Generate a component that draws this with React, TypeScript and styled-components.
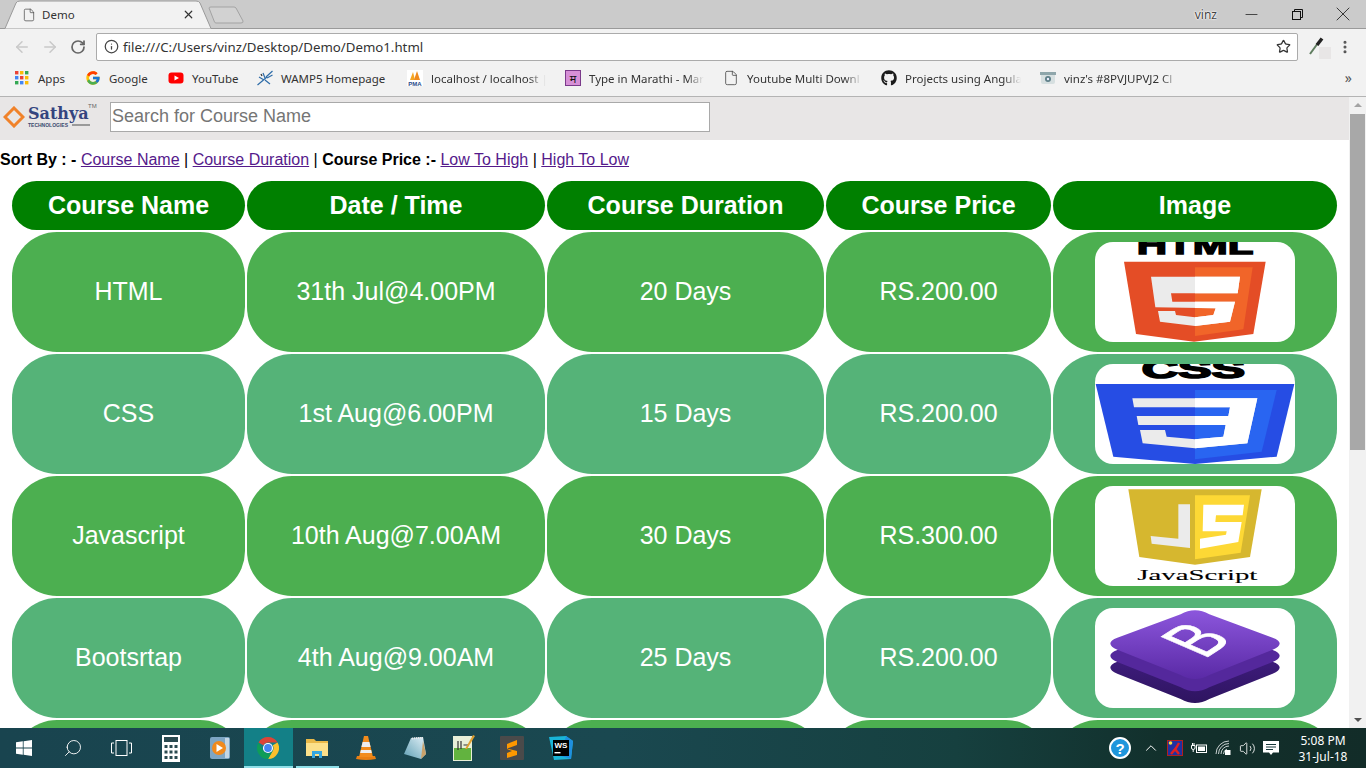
import styled, { createGlobalStyle } from 'styled-components';
import {
  ArrowLeft,
  ArrowRight,
  ChevronUp,
  EllipsisVertical,
  File,
  Info,
  Minus,
  RotateCw,
  Search,
  Star,
  Volume2,
  X,
} from 'lucide-react';
import { FaGithub } from 'react-icons/fa';
import { FcGoogle } from 'react-icons/fc';
import type { ReactNode } from 'react';

const UI_FONT = `'Noto Sans', 'Open Sans', sans-serif`;
const PAGE_FONT = `'Liberation Sans', Arial, sans-serif`;

const GlobalStyle = createGlobalStyle`
  html, body {
    margin: 0;
    padding: 0;
    height: 100%;
    overflow: hidden;
    background: #fff;
  }
  * { box-sizing: border-box; }
`;

/* ---------- logos inside the Image column ---------- */

function HtmlLogo() {
  const five =
    '303,140 570,140 563,190 363,190 367,215 555,215 540,275 435,288 330,275 324,243 375,243 378,255 435,262 490,255 497,235 316,232';
  return (
    <LogoSvg viewBox="135 37 600 298">
      <text x="260" y="73" fontFamily={PAGE_FONT} fontWeight="700" fontSize="76" textLength="350" lengthAdjust="spacingAndGlyphs" stroke="#000" strokeWidth="4">
        HTML
      </text>
      <polygon points="222,95 647,95 610,312 432,335 258,312" fill="#e44d26" />
      <polygon points="435,112 608,112 580,298 435,318" fill="#f16529" />
      <polygon points={five} fill="#ebebeb" />
      <clipPath id="five-right">
        <rect x="435" y="100" width="200" height="220" />
      </clipPath>
      <polygon points={five} fill="#fff" clipPath="url(#five-right)" />
    </LogoSvg>
  );
}

function CssLogo() {
  const three =
    '247,505 622,505 592,640 435,655 278,640 270,600 345,600 350,620 435,628 520,620 527,585 265,585 260,558 535,558 540,532 252,532';
  return (
    <LogoSvg viewBox="135 403 600 298">
      <text x="275" y="443" fontFamily={PAGE_FONT} fontWeight="700" fontSize="80" textLength="310" lengthAdjust="spacingAndGlyphs" stroke="#000" strokeWidth="5">
        CSS
      </text>
      <polygon points="137,462 733,462 680,680 435,702 190,680" fill="#264de4" />
      <polygon points="435,480 680,480 635,665 435,688" fill="#2965f1" />
      <polygon points={three} fill="#ebebeb" />
      <clipPath id="three-right">
        <rect x="435" y="490" width="220" height="180" />
      </clipPath>
      <polygon points={three} fill="#fff" clipPath="url(#three-right)" />
    </LogoSvg>
  );
}

function JsLogo() {
  return (
    <LogoSvg viewBox="135 33 600 298">
      <polygon points="235,42 635,42 600,245 435,268 268,245" fill="#d6b72f" />
      <polygon points="435,60 600,60 572,232 435,252" fill="#fdd835" />
      <polygon points="385,87 420,87 420,218 305,205 302,182 385,190" fill="#ebebeb" />
      <polygon points="460,88 582,88 578,120 498,120 496,140 575,140 565,200 450,220 450,190 528,178 530,168 458,168" fill="#fff" />
      <text x="262" y="315" fontFamily="'Liberation Serif', serif" fontSize="46" textLength="360" lengthAdjust="spacingAndGlyphs" stroke="#000" strokeWidth="0.3">
        JavaScript
      </text>
    </LogoSvg>
  );
}

function BootstrapLogo() {
  const layer =
    'M392 418 C420 402 450 402 478 418 L668 488 C696 498 696 512 668 524 L478 600 C450 616 420 616 392 600 L202 524 C174 512 174 498 202 488 Z';
  return (
    <LogoSvg viewBox="135 400 600 298">
      <defs>
        <linearGradient id="bs-top" x1="0" y1="0" x2="0" y2="1">
          <stop offset="0" stopColor="#8c56dc" />
          <stop offset="1" stopColor="#5a2aa6" />
        </linearGradient>
        <linearGradient id="bs-bottom" x1="0" y1="0" x2="0" y2="1">
          <stop offset="0" stopColor="#47218c" />
          <stop offset="1" stopColor="#2e1460" />
        </linearGradient>
      </defs>
      <path d={layer} transform="translate(0 72)" fill="url(#bs-bottom)" />
      <path d={layer} transform="translate(0 37)" fill="#54289c" />
      <path d={layer} fill="url(#bs-top)" />
      <text transform="matrix(1.37 -0.89 2.03 0.87 462 553)" fontFamily={PAGE_FONT} fontSize="100" fill="#fff" stroke="#fff" strokeWidth="1.2">
        B
      </text>
    </LogoSvg>
  );
}

/* ---------- bookmark icons ---------- */

function AppsIcon() {
  const colors = ['#ea4335', '#fbbc05', '#34a853', '#4285f4', '#ea4335', '#fbbc05', '#34a853', '#4285f4', '#fbbc05'];
  return (
    <svg width="16" height="16" viewBox="0 0 16 16">
      {colors.map((c, i) => (
        <rect key={i} x={1 + (i % 3) * 5} y={1 + Math.floor(i / 3) * 5} width="3.4" height="3.4" fill={c} />
      ))}
    </svg>
  );
}

function YoutubeIcon() {
  return (
    <svg width="16" height="16" viewBox="0 0 16 16">
      <rect x="0.5" y="2.5" width="15" height="11" rx="3" fill="#f00" />
      <polygon points="6.5,5.5 11,8 6.5,10.5" fill="#fff" />
    </svg>
  );
}

function WampIcon() {
  return (
    <svg width="16" height="16" viewBox="0 0 16 16" fill="none" stroke="#2e6ca8" strokeWidth="1.2">
      <path d="M0.5 15 L10 7 M2 7 L7 10 M6 3 L8 8 M15.5 1 L9 7 M15.5 5 L10 8 M8 10 L13 14" />
      <path d="M4 4 L5 6" stroke="#333" />
    </svg>
  );
}

function PmaIcon() {
  return (
    <svg width="16" height="16" viewBox="0 0 16 16">
      <rect width="16" height="16" fill="#fff" />
      <polygon points="3,10 6,2 8,10" fill="#f5a623" />
      <polygon points="7,10 10,1 13,10" fill="#f08a1d" />
      <text x="8" y="15.5" textAnchor="middle" fontFamily={PAGE_FONT} fontWeight="700" fontSize="6" fill="#2a4a8a">
        PMA
      </text>
    </svg>
  );
}

function MarathiIcon() {
  return <MarathiBox>म</MarathiBox>;
}

function ClashIcon() {
  return (
    <svg width="16" height="16" viewBox="0 0 16 16">
      <rect x="1" y="2" width="14" height="12" rx="2" fill="#d6dfe0" />
      <rect x="0" y="2" width="16" height="3" fill="#8fa6ab" />
      <circle cx="8" cy="9" r="3" fill="#5e7f88" />
      <circle cx="8" cy="9" r="1.2" fill="#eef" />
    </svg>
  );
}

/* ---------- taskbar icons ---------- */

function WindowsLogo() {
  return (
    <svg width="16" height="16" viewBox="0 0 16 16" fill="#fff">
      <polygon points="0,2.3 6.8,1.3 6.8,7.6 0,7.6" />
      <polygon points="7.6,1.2 16,0 16,7.6 7.6,7.6" />
      <polygon points="0,8.4 6.8,8.4 6.8,14.7 0,13.7" />
      <polygon points="7.6,8.4 16,8.4 16,16 7.6,14.8" />
    </svg>
  );
}

function TaskViewIcon() {
  return (
    <svg width="21" height="16" viewBox="0 0 21 16" fill="none" stroke="#fff" strokeWidth="1">
      <rect x="5" y="0.5" width="11" height="15" />
      <path d="M3 3 H0.5 V13 H3 M18 3 H20.5 V13 H18" />
    </svg>
  );
}

function CalcIcon() {
  const keys = [0, 1, 2, 3, 4, 5, 6, 7, 8];
  return (
    <svg width="18" height="27" viewBox="0 0 18 27">
      <rect width="18" height="27" fill="#fff" />
      <rect x="2" y="2" width="14" height="5" fill="#2a4a50" />
      {keys.map((k) => (
        <rect key={k} x={2.5 + (k % 3) * 5} y={10 + Math.floor(k / 3) * 5.5} width="3" height="3" fill="#2a4a50" />
      ))}
    </svg>
  );
}

function MediaIcon() {
  return (
    <svg width="20" height="22" viewBox="0 0 20 22">
      <rect width="20" height="22" rx="2" fill="#7ea6c4" />
      <rect x="15" y="1" width="4" height="20" fill="#c3d6e4" />
      <circle cx="9" cy="11" r="7" fill="#f08a1d" />
      <polygon points="6.5,7 13,11 6.5,15" fill="#fff" />
    </svg>
  );
}

function ChromeIcon() {
  return (
    <svg width="22" height="22" viewBox="0 0 48 48">
      <path d="M24 0 A24 24 0 0 1 44.8 12 L24 12 A12 12 0 0 0 13.6 18 L3.2 12 A24 24 0 0 1 24 0 Z" fill="#db4437" />
      <path d="M44.8 12 A24 24 0 0 1 24 48 L34.4 30 A12 12 0 0 0 34.4 18 Z" fill="#fbc02d" />
      <path d="M3.2 12 A24 24 0 0 0 24 48 L34.4 30 A12 12 0 0 1 13.6 30 Z" fill="#0f9d58" />
      <circle cx="24" cy="24" r="11" fill="#fff" />
      <circle cx="24" cy="24" r="8.5" fill="#4285f4" />
    </svg>
  );
}

function ExplorerIcon() {
  return (
    <svg width="22" height="20" viewBox="0 0 22 20">
      <path d="M0 1 H8 L10 3 H22 V18 H0 Z" fill="#e9b949" />
      <rect x="0" y="5" width="22" height="13" fill="#fbe08a" />
      <path d="M6 20 V13 H16 V20 H13 V16 H9 V20 Z" fill="#35a7e0" />
    </svg>
  );
}

function VlcIcon() {
  return (
    <svg width="20" height="24" viewBox="0 0 20 24">
      <path d="M1 20 H19 L20 23 Q10 25 0 23 Z" fill="#e97f12" />
      <polygon points="8,0 12,0 17,21 3,21" fill="#f28c1c" />
      <polygon points="6.600,6 13.400,6 14.600,11 5.400,11" fill="#eee" />
      <polygon points="4.800,14 15.200,14 15.800,17 4.200,17" fill="#eee" />
    </svg>
  );
}

function NotepadIcon() {
  return (
    <svg width="22" height="22" viewBox="0 0 22 22">
      <defs>
        <linearGradient id="pad" x1="0" y1="1" x2="1" y2="0">
          <stop offset="0" stopColor="#5f9fb4" />
          <stop offset="1" stopColor="#e4f2f8" />
        </linearGradient>
      </defs>
      <polygon points="7,1 19,0 22,17 17,22 0,17" fill="url(#pad)" />
      <polygon points="19,4 22,17 17,22" fill="#c9a26a" />
      <path d="M8 1.500 L19 0.500" stroke="#e8e8e8" strokeWidth="2" strokeDasharray="1 1" />
    </svg>
  );
}

function NppIcon() {
  return (
    <svg width="22" height="26" viewBox="0 0 22 26">
      <rect x="0" y="1" width="19" height="25" fill="#e8efd8" />
      <rect x="1" y="13" width="17" height="12" fill="#62b33f" />
      <path d="M5 6 V15 M8 6 V14 M10.500 10 H15" stroke="#333" strokeWidth="1.2" />
      <polygon points="20,0 22,1 14,14 12,14" fill="#e0a030" />
    </svg>
  );
}

function SublimeIcon() {
  return (
    <svg width="24" height="24" viewBox="0 0 24 24">
      <rect width="24" height="24" rx="1" fill="#4a4a4a" />
      <polygon points="17,4 17,9 7,12.500 17,15 17,19 7,22 7,17 12,15 7,13 7,8" fill="#ff9800" />
    </svg>
  );
}

function WebStormIcon() {
  return (
    <svg width="24" height="24" viewBox="0 0 24 24">
      <polygon points="0,1 17,0 24,5 22,23 5,24" fill="#19b5d8" />
      <polygon points="17,0 24,5 22,23 12,20" fill="#1f8fe0" />
      <rect x="4" y="4" width="16" height="16" fill="#000" />
      <text x="5.5" y="12" fontFamily={PAGE_FONT} fontWeight="700" fontSize="8" fill="#fff">
        WS
      </text>
      <rect x="5.5" y="16" width="6" height="1.4" fill="#fff" />
    </svg>
  );
}

function HelpIcon() {
  return <HelpBadge>?</HelpBadge>;
}

function TrayRedIcon() {
  return (
    <svg width="16" height="16" viewBox="0 0 16 16">
      <rect x="0.5" y="0.5" width="15" height="15" fill="#2030a0" stroke="#b02020" />
      <circle cx="3.5" cy="3" r="1.8" fill="#f5e040" />
      <path d="M4 14 L9 8 L12 3 M8 9 L12 14" stroke="#e02020" strokeWidth="2.4" fill="none" />
    </svg>
  );
}

function BatteryIcon() {
  return (
    <svg width="16" height="12" viewBox="0 0 16 12" fill="none" stroke="#fff">
      <rect x="5.5" y="3" width="10" height="7.5" />
      <rect x="7" y="4.5" width="7" height="4.5" fill="#fff" stroke="none" />
      <path d="M0.5 3.5 H4 V6 Q4 7.5 2.2 7.5 Q0.5 7.5 0.5 6 Z M1.5 1 V3.5 M3 1 V3.5 M2.2 7.5 V10" />
    </svg>
  );
}

function WifiIcon() {
  return (
    <svg width="16" height="16" viewBox="0 0 16 16" fill="none" stroke="#c8d0d0" strokeWidth="1">
      <path d="M1 14 A13 13 0 0 1 14 1 M3.5 14 A10.5 10.5 0 0 1 14 3.5 M6 14 A8 8 0 0 1 14 6 M8.5 14 A5.5 5.5 0 0 1 12 9" />
      <rect x="10" y="10" width="5.5" height="5" fill="#fff" stroke="none" />
    </svg>
  );
}

function NotificationIcon() {
  return (
    <svg width="16" height="16" viewBox="0 0 16 16">
      <path d="M0 1 H16 V12.5 H10 L8 15 L6 12.5 H0 Z" fill="#fff" />
      <path d="M3 4.5 H13 M3 7 H13 M3 9.5 H10" stroke="#16383a" strokeWidth="1" />
    </svg>
  );
}

function Eyedropper() {
  return (
    <EyedropperWrap>
      <svg width="16" height="18" viewBox="0 0 16 18" fill="none">
        <path d="M2 17 L10 6" stroke="#5f7d5f" strokeWidth="2" />
        <path d="M9 8 L14 1.5" stroke="#222" strokeWidth="3.4" />
      </svg>
      <EyedropperSwatch />
    </EyedropperWrap>
  );
}

/* ---------- data ---------- */

type Bookmark = { icon: ReactNode; label: string; width: number; fade?: boolean };

const bookmarks: Bookmark[] = [
  { icon: <AppsIcon />, label: 'Apps', width: 28 },
  { icon: <FcGoogle size={16} />, label: 'Google', width: 40 },
  { icon: <YoutubeIcon />, label: 'YouTube', width: 46 },
  { icon: <WampIcon />, label: 'WAMP5 Homepage', width: 107 },
  { icon: <PmaIcon />, label: 'localhost / localhost |', width: 115, fade: true },
  { icon: <MarathiIcon />, label: 'Type in Marathi - Mar', width: 115, fade: true },
  { icon: <File size={16} strokeWidth={1.2} color="#444" />, label: 'Youtube Multi Downl', width: 115, fade: true },
  { icon: <FaGithub size={16} color="#1b1b1b" />, label: 'Projects using Angula', width: 116, fade: true },
  { icon: <ClashIcon />, label: "vinz's #8PVJUPVJ2 Cl", width: 115, fade: true },
];

const courses = [
  { name: 'HTML', date: '31th Jul@4.00PM', duration: '20 Days', price: 'RS.200.00', logo: <HtmlLogo /> },
  { name: 'CSS', date: '1st Aug@6.00PM', duration: '15 Days', price: 'RS.200.00', logo: <CssLogo /> },
  { name: 'Javascript', date: '10th Aug@7.00AM', duration: '30 Days', price: 'RS.300.00', logo: <JsLogo /> },
  { name: 'Bootsrtap', date: '4th Aug@9.00AM', duration: '25 Days', price: 'RS.200.00', logo: <BootstrapLogo /> },
];

const columns = [
  { title: 'Course Name', width: 233 },
  { title: 'Date / Time', width: 298 },
  { title: 'Course Duration', width: 277 },
  { title: 'Course Price', width: 225 },
  { title: 'Image', width: 284 },
];

const taskbarApps: { icon: ReactNode; active?: boolean; running?: boolean }[] = [
  { icon: <CalcIcon /> },
  { icon: <MediaIcon /> },
  { icon: <ChromeIcon />, active: true },
  { icon: <ExplorerIcon />, running: true },
  { icon: <VlcIcon /> },
  { icon: <NotepadIcon /> },
  { icon: <NppIcon /> },
  { icon: <SublimeIcon /> },
  { icon: <WebStormIcon /> },
];

export default function App() {
  return (
    <>
      <GlobalStyle />
      <Screen>
        <TabStrip>
          <Tab>
            <TabShape viewBox="0 0 216 29" width="216" height="29">
              <path d="M0 28.5 H5 L16 3 Q17 1 20 1 H196 Q199 1 200 3 L211 28.5 H216" fill="#f2f2f2" stroke="#9a9a9a" />
            </TabShape>
            <TabIcon>
              <File size={14} strokeWidth={1.2} color="#444" />
            </TabIcon>
            <TabTitle>Demo</TabTitle>
            <TabClose>
              <X size={13} strokeWidth={2.2} />
            </TabClose>
          </Tab>
          <NewTab>
            <svg width="36" height="18" viewBox="0 0 36 18" fill="#d2d2d2" stroke="#a3a3a3">
              <path d="M1 2 Q1 1 3 1 H26 Q27 1 28 2 L35 15 Q35.500 17 33 17 H8 Q7 17 6.500 16 Z" />
            </svg>
          </NewTab>
          <UserName>vinz</UserName>
          <WindowButton>
            <Minus size={19} strokeWidth={0.9} />
          </WindowButton>
          <WindowButton>
            <svg width="11" height="11" viewBox="0 0 11 11" fill="none" stroke="#111">
              <rect x="0.5" y="2.5" width="8" height="8" />
              <path d="M2.500 2.500 V0.500 H10.500 V8.500 H8.500" />
            </svg>
          </WindowButton>
          <WindowButton>
            <X size={24} strokeWidth={0.8} />
          </WindowButton>
        </TabStrip>

        <Toolbar>
          <NavButton $muted>
            <ArrowLeft size={18} />
          </NavButton>
          <NavButton $muted>
            <ArrowRight size={18} />
          </NavButton>
          <NavButton>
            <RotateCw size={16} strokeWidth={2.6} />
          </NavButton>
          <AddressBar>
            <Info size={15} strokeWidth={2} color="#444" />
            <AddressText>file:///C:/Users/vinz/Desktop/Demo/Demo1.html</AddressText>
            <Star size={15} strokeWidth={2} color="#333" />
          </AddressBar>
          <ToolbarEnd>
            <Eyedropper />
            <EllipsisVertical size={16} strokeWidth={2.6} color="#555" />
          </ToolbarEnd>
        </Toolbar>

        <BookmarkBar>
          {bookmarks.map((b) => (
            <BookmarkItem key={b.label}>
              <BookmarkIcon>{b.icon}</BookmarkIcon>
              <BookmarkLabel $width={b.width} $fade={b.fade}>
                {b.label}
              </BookmarkLabel>
            </BookmarkItem>
          ))}
          <MoreBookmarks>»</MoreBookmarks>
        </BookmarkBar>

        <Viewport>
          <Page>
            <SearchHeader>
              <Logo>
                <svg width="22" height="22" viewBox="0 0 22 22" fill="none" stroke="#f0822a" strokeWidth="3">
                  <polygon points="11,2 20,11 11,20 2,11" />
                </svg>
                <LogoWords>
                  <LogoName>
                    Sathya<LogoMark>TM</LogoMark>
                  </LogoName>
                  <LogoSub>TECHNOLOGIES</LogoSub>
                </LogoWords>
              </Logo>
              <SearchInput placeholder="Search for Course Name" readOnly />
            </SearchHeader>

            <SortRow>
              <b>Sort By : - </b>
              <SortLink href="#">Course Name</SortLink> | <SortLink href="#">Course Duration</SortLink> |{' '}
              <b>Course Price :- </b>
              <SortLink href="#">Low To High</SortLink> | <SortLink href="#">High To Low</SortLink>
            </SortRow>

            <CourseTable>
              <colgroup>
                {columns.map((c) => (
                  <col key={c.title} width={c.width} />
                ))}
              </colgroup>
              <thead>
                <tr>
                  {columns.map((c) => (
                    <HeadCell key={c.title}>{c.title}</HeadCell>
                  ))}
                </tr>
              </thead>
              <tbody>
                {courses.map((course) => (
                  <tr key={course.name}>
                    <BodyCell>{course.name}</BodyCell>
                    <BodyCell>{course.date}</BodyCell>
                    <BodyCell>{course.duration}</BodyCell>
                    <BodyCell>{course.price}</BodyCell>
                    <ImageCell>
                      <LogoFrame>{course.logo}</LogoFrame>
                    </ImageCell>
                  </tr>
                ))}
                <tr>
                  {columns.map((c) => (
                    <BodyCell key={c.title} />
                  ))}
                </tr>
              </tbody>
            </CourseTable>
          </Page>
          <ScrollTrack>
            <ScrollArrow $down={false} />
            <ScrollThumb />
            <ScrollArrow $down />
          </ScrollTrack>
        </Viewport>

        <Taskbar>
          <TaskButton>
            <WindowsLogo />
          </TaskButton>
          <TaskButton>
            <Search size={20} strokeWidth={1.1} color="#fff" style={{ transform: 'scaleX(-1)' }} />
          </TaskButton>
          <TaskButton>
            <TaskViewIcon />
          </TaskButton>
          {taskbarApps.map((app, i) => (
            <TaskButton key={i} $active={app.active} $running={app.running}>
              {app.icon}
            </TaskButton>
          ))}
          <Tray>
            <HelpIcon />
            <TrayIcon>
              <ChevronUp size={18} strokeWidth={1.3} color="#fff" />
            </TrayIcon>
            <TrayIcon>
              <TrayRedIcon />
            </TrayIcon>
            <TrayIcon>
              <BatteryIcon />
            </TrayIcon>
            <TrayIcon>
              <WifiIcon />
            </TrayIcon>
            <TrayIcon>
              <Volume2 size={17} strokeWidth={1.2} color="#fff" />
            </TrayIcon>
            <TrayIcon>
              <NotificationIcon />
            </TrayIcon>
            <Clock>
              <span>5:08 PM</span>
              <span>31-Jul-18</span>
            </Clock>
          </Tray>
        </Taskbar>
      </Screen>
    </>
  );
}

const Screen = styled.div`
  width: 1366px;
  height: 768px;
  display: flex;
  flex-direction: column;
  overflow: hidden;
  font-family: ${UI_FONT};
`;

const TabStrip = styled.div`
  height: 29px;
  flex: none;
  display: flex;
  align-items: center;
  background: #cbcbcb;
  border-bottom: 1px solid #9a9a9a;
`;

const Tab = styled.div`
  position: relative;
  width: 205px;
  height: 29px;
  margin-bottom: -1px;
  display: flex;
  align-items: center;
  padding-left: 22px;
`;

const TabShape = styled.svg`
  position: absolute;
  left: 0;
  top: 0;
`;

const TabIcon = styled.span`
  position: relative;
  display: flex;
  width: 20px;
`;

const TabTitle = styled.span`
  position: relative;
  font-size: 11.5px;
  color: #333;
`;

const TabClose = styled.span`
  position: absolute;
  left: 182px;
  top: 8px;
  display: flex;
  color: #333;
`;

const NewTab = styled.div`
  display: flex;
  margin-left: 3px;
  margin-top: 2px;
`;

const UserName = styled.span`
  margin-left: auto;
  margin-right: 11px;
  font-size: 12px;
  color: #444;
  text-shadow: 0 0 2px #fff, 0 0 2px #fff, 0 0 1px #fff;
`;

const WindowButton = styled.div`
  width: 46px;
  height: 24px;
  display: flex;
  align-items: center;
  justify-content: center;
  color: #111;
`;

const Toolbar = styled.div`
  height: 33px;
  flex: none;
  display: flex;
  align-items: center;
  padding: 2px 0 0 8px;
  background: #f2f2f2;
`;

const NavButton = styled.div<{ $muted?: boolean }>`
  width: 28px;
  display: flex;
  justify-content: center;
  color: ${(p) => (p.$muted ? '#c9c9c9' : '#666')};
`;

const AddressBar = styled.div`
  width: 1202px;
  height: 28px;
  margin-left: 4px;
  padding: 0 6px 0 7px;
  display: flex;
  align-items: center;
  background: #fff;
  border: 1px solid #ababab;
  border-radius: 2px;
`;

const AddressText = styled.span`
  flex: 1;
  margin-left: 4px;
  font-size: 13.25px;
  color: #333;
`;

const ToolbarEnd = styled.div`
  flex: 1;
  display: flex;
  align-items: center;
  justify-content: space-between;
  padding: 0 13px 0 10px;
`;

const EyedropperWrap = styled.div`
  position: relative;
  width: 20px;
  height: 20px;
`;

const EyedropperSwatch = styled.span`
  position: absolute;
  right: -3px;
  bottom: -2px;
  width: 12px;
  height: 12px;
  background: #e8e6e6;
`;

const BookmarkBar = styled.div`
  height: 35px;
  flex: none;
  display: flex;
  align-items: center;
  gap: 19px;
  padding: 0 14px 2px;
  background: #f2f2f2;
  border-bottom: 1px solid #b4b4b4;
`;

const BookmarkItem = styled.div`
  display: flex;
  align-items: center;
  gap: 8px;
`;

const BookmarkIcon = styled.span`
  display: flex;
  width: 16px;
  height: 16px;
  align-items: center;
  justify-content: center;
`;

const BookmarkLabel = styled.span<{ $width: number; $fade?: boolean }>`
  display: block;
  width: ${(p) => p.$width}px;
  white-space: nowrap;
  font-size: 11.5px;
  color: #333;
  ${(p) =>
    p.$fade &&
    `-webkit-mask-image: linear-gradient(to right, #000 85%, transparent 100%);
     mask-image: linear-gradient(to right, #000 85%, transparent 100%);`}
`;

const MarathiBox = styled.span`
  display: flex;
  width: 16px;
  height: 16px;
  align-items: center;
  justify-content: center;
  background: #d68fd6;
  border: 1px solid #7a3a8a;
  font-family: 'Noto Sans', 'Lohit Devanagari', sans-serif;
  font-size: 11px;
  line-height: 1;
  color: #111;
`;

const MoreBookmarks = styled.span`
  margin-left: auto;
  font-size: 14px;
  line-height: 1;
  color: #555;
`;

const Viewport = styled.div`
  flex: 1;
  min-height: 0;
  display: flex;
`;

const Page = styled.div`
  width: 1349px;
  overflow: hidden;
  background: #fff;
  font-family: ${PAGE_FONT};
`;

const SearchHeader = styled.div`
  height: 43px;
  display: flex;
  align-items: center;
  padding: 0 0 4px 3px;
  background: #e8e6e6;
`;

const Logo = styled.div`
  width: 107px;
  display: flex;
  align-items: center;
  gap: 3px;
`;

const LogoWords = styled.div`
  display: flex;
  flex-direction: column;
  gap: 1px;
`;

const LogoName = styled.span`
  position: relative;
  font-family: 'DejaVu Serif', 'Liberation Serif', serif;
  font-weight: 700;
  font-size: 16px;
  line-height: 16px;
  color: #34447f;
`;

const LogoMark = styled.sup`
  position: absolute;
  left: 60px;
  top: -3px;
  font-family: ${PAGE_FONT};
  font-weight: 400;
  font-size: 6px;
  line-height: 1;
  color: #666;
`;

const LogoSub = styled.span`
  display: flex;
  align-items: center;
  gap: 4px;
  font-family: ${PAGE_FONT};
  font-size: 5px;
  line-height: 5px;
  font-weight: 700;
  color: #3a4a70;
  &::after {
    content: '';
    width: 18px;
    height: 2px;
    background: #9a9a9a;
  }
`;

const SearchInput = styled.input`
  width: 600px;
  height: 30px;
  padding: 0 1px;
  border: 1px solid #a9a9a9;
  background: #fff;
  font-family: ${PAGE_FONT};
  font-size: 18px;
  color: #333;
  outline: none;
  &::placeholder {
    color: #757575;
  }
`;

const SortRow = styled.div`
  margin: 11px 0 10px 0;
  font-size: 16px;
  line-height: 18px;
  color: #000;
`;

const SortLink = styled.a`
  color: #551a8b;
  text-decoration: underline;
`;

const CourseTable = styled.table`
  width: 1329px;
  margin: 0 auto;
  table-layout: fixed;
  border-collapse: separate;
  border-spacing: 2px;
`;

const HeadCell = styled.th`
  height: 49px;
  padding: 0;
  background: #008000;
  border-radius: 25px;
  color: #fff;
  font-size: 25px;
  font-weight: 700;
  text-align: center;
`;

const BodyCell = styled.td`
  height: 120px;
  padding: 0 0 2px;
  border-radius: 45px;
  color: #fff;
  font-size: 25px;
  text-align: center;
  background: #4caf50;
  tr:nth-child(even) > & {
    background: #55b378;
  }
`;

const ImageCell = styled(BodyCell)`
  padding: 0;
`;

const LogoFrame = styled.div`
  width: 200px;
  height: 100px;
  margin: 0 auto;
  overflow: hidden;
  background: #fff;
  border-radius: 18px;
`;

const LogoSvg = styled.svg`
  display: block;
  width: 200px;
  height: 100px;
`;

const ScrollTrack = styled.div`
  width: 17px;
  display: flex;
  flex-direction: column;
  align-items: center;
  background: #f1f1f1;
`;

const ScrollArrow = styled.span<{ $down: boolean }>`
  width: 0;
  height: 0;
  margin: ${(p) => (p.$down ? 'auto 0 6px' : '6px 0 0')};
  border-left: 4px solid transparent;
  border-right: 4px solid transparent;
  ${(p) => (p.$down ? 'border-top: 4px solid #505050;' : 'border-bottom: 4px solid #a3a3a3;')}
`;

const ScrollThumb = styled.div`
  width: 15px;
  height: 336px;
  margin-top: 7px;
  background: #a8a8a8;
`;

const Taskbar = styled.div`
  height: 40px;
  flex: none;
  display: flex;
  align-items: stretch;
  background: linear-gradient(to right, #19444f 0%, #1a4850 45%, #16403f 70%, #12302c 85%, #122c28 100%);
`;

const TaskButton = styled.div<{ $active?: boolean; $running?: boolean }>`
  position: relative;
  width: 48.8px;
  display: flex;
  align-items: center;
  justify-content: center;
  background: ${(p) => (p.$active ? '#138087' : 'transparent')};
  ${(p) =>
    (p.$active || p.$running) &&
    `&::after {
      content: '';
      position: absolute;
      left: ${p.$active ? 0 : 3}px;
      right: ${p.$active ? 0 : 3}px;
      bottom: 0;
      height: 2px;
      background: #8fdfe8;
    }`}
`;

const Tray = styled.div`
  margin-left: auto;
  display: flex;
  align-items: center;
  padding-right: 12px;
`;

const HelpBadge = styled.span`
  width: 22px;
  height: 22px;
  margin-right: 8px;
  display: flex;
  align-items: center;
  justify-content: center;
  border-radius: 50%;
  background: #1e96dc;
  border: 2px solid #fff;
  color: #fff;
  font-family: ${PAGE_FONT};
  font-weight: 700;
  font-size: 15px;
`;

const TrayIcon = styled.span`
  width: 24px;
  display: flex;
  justify-content: center;
`;

const Clock = styled.div`
  width: 62px;
  margin-left: 9px;
  display: flex;
  flex-direction: column;
  align-items: center;
  gap: 1px;
  font-size: 12px;
  line-height: 15px;
  color: #fff;
`;
